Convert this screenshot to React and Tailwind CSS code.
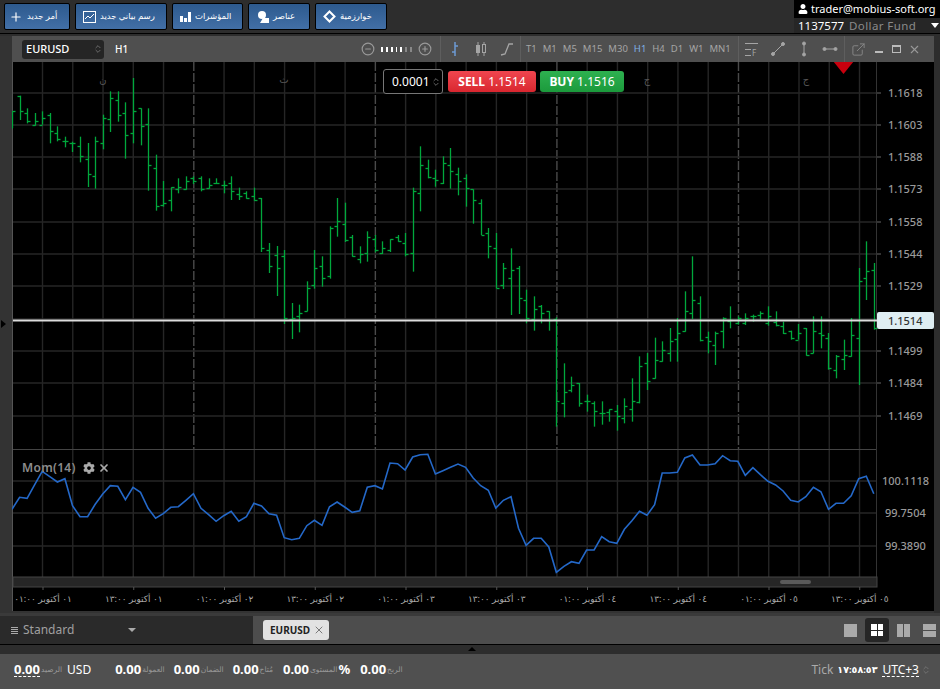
import React from 'react'
import { Plus, X, CirclePlus, CircleMinus, ExternalLink, ChevronsUpDown } from 'lucide-react'
import { FaCog, FaUser } from 'react-icons/fa'

// bar data is [high, low, open, close], read off in 3x crop units, hence the base offsets
const barsA = [[157,207,207,157],[110,183,110,157],[148,193,162,187],[162,200,197,187],[157,197,197,176],[162,253,167,215],[202,247,221,241],[233,265,247,247],[248,279,253,253],[233,310,261,292],[252,384,301,346],[233,389,352,246],[167,271,253,176],[97,219,181,116],[97,188,122,167],[130,299,162,227],[57,253,221,157],[148,259,148,202],[148,395,196,318],[287,455,326,442],[366,443,437,431],[385,457,423,385],[358,403,391,385],[352,392,391,366],[352,375,358,365],[352,397,357,391],[358,389,386,377],[358,375,372,372],[365,403,377,377],[352,423,371,397],[386,423,405,411],[397,419,403,417],[386,425,411,423],[417,579,417,567],[552,642,572,621],[561,711,587,626]]
const barsB = [[363,585,382,567],[522,630,570,567],[527,610,561,553],[457,547,547,476],[363,479,467,416],[382,473,411,448],[292,449,442,297],[207,323,292,277],[221,339,286,332],[318,383,325,382],[352,403,391,376],[307,398,371,325],[318,370,331,363],[337,375,371,357],[331,369,364,331],[318,338,325,337],[312,382,343,376],[176,428,371,187],[52,247,193,107],[92,148,116,144],[122,173,148,153],[82,165,161,102],[57,179,107,127],[116,199,136,156],[136,233,148,176],[181,284,181,212],[211,318,222,317],[297,388,312,351],[312,478,357,476],[402,480,467,416],[358,558,448,422],[411,555,416,508],[482,583,513,567],[502,605,570,541]]
const barsC = [[228,283,232,253],[247,305,247,272],[265,593,270,517],[403,565,522,488],[443,490,483,468],[462,533,463,522],[497,548,517,517],[517,593,522,547],[517,587,552,552],[541,578,548,541],[528,605,547,562],[508,583,567,532],[448,578,541,517],[382,523,518,412],[372,483,403,457],[326,449,447,392],[337,398,397,362],[297,398,372,337],[267,398,331,312],[187,308,307,246],[82,270,253,212],[202,337,221,332],[308,373,323,337],[308,408,347,312],[265,358,307,267],[232,298,277,272],[262,287,282,267],[253,288,283,267],[257,278,262,262],[247,272,257,252],[232,290,282,262],[247,292,278,287],[278,315,292,312],[305,332,307,327],[285,332,332,312],[297,380,297,378],[262,373,372,307],[262,358,312,318],[312,422,327,417],[378,448,422,382],[332,423,391,377],[267,383,382,318],[117,468,326,157],[37,213,148,127],[102,302,122,298]]

const toPage = (base) => (b) => b.map((v) => base + v / 3)
const bars = [...barsA.map(toPage(60)), ...barsB.map(toPage(130)), ...barsC.map(toPage(230))]

const momentum = [211,175,178,137,97,113,129,119,200,233,233,196,165,140,142,182,145,160,208,238,224,205,203,184,164,208,227,247,230,217,247,233,193,201,224,229,296,302,298,260,244,259,203,189,204,220,215,145,140,150,72,74,93,54,47,46,105,95,85,75,85,117,140,154,207,184,173,268,319,298,298,324,400,382,368,373,333,333,293,308,313,271,245,217,229,197,102,102,100,57,48,78,78,74,50,65,67,109,86,107,127,138,156,184,189,173,145,158,211,193,193,170,119,112,164]

const barX = (i) => 12 + i * 7.56
const momentumPoints = momentum.map((v, i) => `${barX(i).toFixed(1)},${(440 + v / 3).toFixed(1)}`).join(' ')

const vLines = Array.from({ length: 28 }, (_, i) => 42.5 + i * 30.26)
const hLines = [94, 126, 158, 190, 223, 255, 287, 320, 352, 384, 417]
const priceLabels = ['1.1618', '1.1603', '1.1588', '1.1573', '1.1558', '1.1544', '1.1529', null, '1.1499', '1.1484', '1.1469']
const momLines = [[482, '100.1118', 882], [514, '99.7504', 885], [547, '99.3890', 885]]
const timeLabels = ['٠١ أكتوبر ٠١:٠٠', '٠١ أكتوبر ١٣:٠٠', '٠٢ أكتوبر ٠١:٠٠', '٠٢ أكتوبر ١٣:٠٠', '٠٣ أكتوبر ٠١:٠٠', '٠٣ أكتوبر ١٣:٠٠', '٠٤ أكتوبر ٠١:٠٠', '٠٤ أكتوبر ١٣:٠٠', '٠٥ أكتوبر ٠١:٠٠', '٠٥ أكتوبر ١٣:٠٠']
const dayMarks = [[103, 'ن'], [284, 'ث'], [647, 'ج'], [806, 'ج']]
const timeframes = ['T1', 'M1', 'M5', 'M15', 'M30', 'H1', 'H4', 'D1', 'W1', 'MN1']
const stats = [
  { value: '0.00', label: 'العمولة', ml: 'ml-[24px]' },
  { value: '0.00', label: 'الضمان', ml: 'ml-[9px]' },
  { value: '0.00', label: 'مُتاح', ml: 'ml-[9px]' },
  { value: '0.00', label: 'المستوى', ml: 'ml-[10px]', suffix: '%' },
  { value: '0.00', label: 'الربح', ml: 'ml-[10px]' }
]

const Chart = () => (
  <svg viewBox="12 63 922 549" width="922" height="549" className="block">
    <rect x="12" y="63" width="922" height="549" fill="#000" />
    {vLines.map((x, i) => (
      <g key={x} strokeWidth="1.4">
        <line x1={x} x2={x} y1="63" y2="450" stroke={i % 6 === 5 ? '#4a4a4a' : '#262626'} strokeDasharray={i % 6 === 5 ? '9 2' : undefined} />
        <line x1={x} x2={x} y1="450" y2="578" stroke="#262626" />
      </g>
    ))}
    {hLines.map((y) => <line key={y} x1="13" x2="877" y1={y} y2={y} stroke="#262626" strokeWidth="1.6" />)}
    {momLines.map(([y]) => <line key={y} x1="13" x2="877" y1={y} y2={y} stroke="#262626" strokeWidth="1.6" />)}
    <line x1="13" x2="877" y1="450.5" y2="450.5" stroke="#444" />
    <line x1="12.5" x2="12.5" y1="63" y2="612" stroke="#555" />
    <line x1="876.5" x2="876.5" y1="63" y2="588" stroke="#333" />

    {dayMarks.map(([x, t]) => <text key={x} x={x} y="84" fontSize="10" fill="#555" textAnchor="middle">{t}</text>)}

    {bars.map(([high, low, open, close], i) => {
      const x = Math.round(barX(i)) + 0.5
      return (
        <g key={i} stroke="#00a83c" strokeWidth="1.3">
          <line x1={x} x2={x} y1={high} y2={low} />
          <line x1={x - 3} x2={x} y1={Math.round(open) + 0.5} y2={Math.round(open) + 0.5} />
          <line x1={x} x2={x + 3} y1={Math.round(close) + 0.5} y2={Math.round(close) + 0.5} />
        </g>
      )
    })}

    <line x1="13" x2="877" y1="321.5" y2="321.5" stroke="#dcdcdc" strokeWidth="2" />
    <polyline points={momentumPoints} fill="none" stroke="#2468c8" strokeWidth="1.6" />

    {/* price axis */}
    {priceLabels.map((label, i) => label && (
      <g key={label}>
        <line x1="877" x2="881" y1={hLines[i]} y2={hLines[i]} stroke="#666" />
        <text x="888" y={hLines[i] + 4} fontSize="11" fill="#9a9a9a" className="font-medium">{label}</text>
      </g>
    ))}
    {momLines.map(([y, t, x]) => (
      <text key={y} x={x} y={y + 4} fontSize="11" fill="#9a9a9a" className="font-medium">{t}</text>
    ))}
    <rect x="877" y="313" width="57" height="17" rx="2" fill="#dfeef3" />
    <text x="888" y="325.5" fontSize="11" fill="#333" className="font-medium">1.1514</text>

    {/* scroll strip + time axis */}
    <rect x="13" y="578" width="864" height="10" fill="#262626" stroke="#444" />
    <rect x="780" y="581" width="31" height="4" rx="2" fill="#5a5a5a" />
    {timeLabels.map((t, i) => {
      const x = 43 + i * 90.75
      return (
        <g key={t}>
          <line x1={x} x2={x} y1="588" y2="591" stroke="#555" />
          <text x={x} y="603" fontSize="9" fill="#a8a8a8" textAnchor="middle" direction="rtl">{t}</text>
        </g>
      )
    })}
    <polygon points="833,62 854,62 843.5,75" fill="#c8000e" />
  </svg>
)

const ToolButton = ({ icon, label, className }) => (
  <button className={`flex h-[27px] items-center gap-[4px] rounded-[2px] border border-black bg-linear-to-b from-[#2d5a8e] to-[#426fa6] text-[8.5px] text-white ${className}`}>
    {icon}
    <span>{label}</span>
  </button>
)

export default function App() {
  return (
    <div className="flex h-screen w-full flex-col overflow-hidden bg-[#2d2d2d] font-['Noto_Sans','DejaVu_Sans',sans-serif]">
      {/* Top bar */}
      <header className="flex h-[34px] shrink-0 items-start justify-between border-b border-black">
        <div className="flex gap-[5px] pl-[4px] pt-[3px]">
          <ToolButton className="w-[66px] pl-[4px]" icon={<Plus size={14} />} label="أمر جديد" />
          <ToolButton className="w-[92px] pl-[7px]" label="رسم بياني جديد" icon={
            <svg width="13" height="12" viewBox="0 0 13 12" fill="none" stroke="#fff"><rect x="0.5" y="0.5" width="12" height="11" /><polyline points="2,8 5,5 7,7 11,3" /></svg>
          } />
          <ToolButton className="w-[71px] pl-[7px]" label="المؤشرات" icon={
            <svg width="11" height="10" viewBox="0 0 11 10" fill="#fff"><rect x="0" y="4" width="3" height="6" /><rect x="4" y="6" width="3" height="4" /><rect x="8" y="0" width="3" height="10" /></svg>
          } />
          <ToolButton className="w-[62px] pl-[8px]" label="عناصر" icon={
            <svg width="12" height="12" viewBox="0 0 12 12" fill="#fff"><circle cx="5" cy="4" r="4" /><path d="M3 12 L6 7 L12 7 L12 12 Z" /></svg>
          } />
          <ToolButton className="w-[72px] pl-[7px]" label="خوارزمية" icon={
            <svg width="13" height="13" viewBox="0 0 13 13" fill="none" stroke="#fff" strokeWidth="2"><path d="M6.5 1.5 L11.5 6.5 L6.5 11.5 L1.5 6.5 Z" /></svg>
          } />
        </div>
        <div className="w-[146px] bg-black">
          <div className="flex h-[18px] items-center gap-[3px] whitespace-nowrap pl-[4px] text-[11px] text-white">
            <FaUser size={10} className="shrink-0" />
            <span>trader@mobius-soft.org</span>
          </div>
          <div className="flex h-[15px] items-center whitespace-nowrap bg-[#262626] pl-[4px] pr-[1px] text-[11.5px]">
            <span className="text-white">1137577</span>
            <span className="ml-[5px] tracking-[0.4px] text-[#8a8a8a]">Dollar Fund</span>
            <span className="ml-auto h-0 w-0 border-x-[4px] border-t-[5px] border-x-transparent border-t-white" />
          </div>
        </div>
      </header>

      <div className="h-[2px] shrink-0 bg-[#2d2d2d]" />

      {/* Chart window */}
      <div className="flex flex-1 bg-[#333]">
        <div className="relative w-[12px] shrink-0">
          <span className="absolute left-[1px] top-[284px] h-0 w-0 border-y-[4px] border-l-[5px] border-y-transparent border-l-black" />
        </div>
        <div className="relative w-[922px]">
          <div className="flex h-[26px] items-center bg-[#4f4f4f] text-[#a5a5a5]">
            <div className="ml-[10px] flex h-[19px] w-[82px] items-center justify-between rounded-[3px] bg-[#252525] pl-[4px] pr-[1px] text-[11px] font-medium text-white">
              EURUSD
              <ChevronsUpDown size={10} className="text-[#777]" />
            </div>
            <span className="ml-[11px] text-[10px] font-medium text-white">H1</span>

            <div className="ml-auto flex h-full items-center">
              <div className="flex items-center gap-[6px] pr-[8px]">
                <CircleMinus size={14} className="text-[#999]" />
                <div className="flex w-[31px] gap-[3px]">
                  <i className="h-[5px] w-[2px] bg-white" />
                  <i className="h-[5px] w-[2px] bg-white" />
                  <i className="h-[5px] w-[2px] bg-white" />
                  <i className="h-[5px] w-[2px] bg-white" />
                  <i className="h-[5px] w-[2px] bg-white" />
                  <i className="h-[5px] w-[2px] bg-[#888]" />
                  <i className="h-[5px] w-[2px] bg-[#888]" />
                </div>
                <CirclePlus size={14} className="text-[#999]" />
              </div>
              <div className="flex h-full w-[80px] items-center gap-[10px] border-l border-[#5e5e5e] pl-[6px]">
                <svg width="16" height="16" viewBox="0 0 16 16" fill="none" stroke="#6d9bd4" strokeWidth="1.5"><path d="M8 1 V15 M5 11 H8 M8 5 H11" /></svg>
                <svg width="16" height="16" viewBox="0 0 16 16" fill="none" stroke="#a5a5a5"><path d="M5 1 V15 M11 1 V15" /><rect x="3.5" y="4.5" width="3" height="7" fill="#a5a5a5" /><rect x="9.5" y="3.5" width="3" height="8" fill="#4f4f4f" /></svg>
                <svg width="16" height="16" viewBox="0 0 16 16" fill="none" stroke="#a5a5a5" strokeWidth="1.3"><polyline points="2,14 6,13 10,3 14,3" /></svg>
              </div>
              <div className="flex h-full w-[218px] items-center gap-[6px] border-l border-[#5e5e5e] pl-[5px] text-[9.5px]">
                {timeframes.map((t) => (
                  <span key={t} className={t === 'H1' ? 'text-[#7fb0e6]' : ''}>{t}</span>
                ))}
              </div>
              <div className="flex h-full w-[106px] items-center gap-[10px] border-l border-[#5e5e5e] pl-[5px]">
                <svg width="16" height="16" viewBox="0 0 16 16" fill="none" stroke="#a5a5a5"><path d="M1 2.5 H14 M1 8.5 H7 M1 14.5 H7" /><text x="8" y="15" fontSize="8" fill="#a5a5a5" stroke="none">F</text></svg>
                <svg width="16" height="16" viewBox="0 0 16 16" fill="none" stroke="#a5a5a5"><path d="M3 13 L13 3" /><circle cx="3" cy="13" r="1.5" fill="#a5a5a5" /><circle cx="13" cy="3" r="1.5" fill="#a5a5a5" /></svg>
                <svg width="16" height="16" viewBox="0 0 16 16" fill="none" stroke="#a5a5a5"><path d="M8 2 V14" /><circle cx="8" cy="2.5" r="1.5" fill="#a5a5a5" /><circle cx="8" cy="13.5" r="1.5" fill="#a5a5a5" /></svg>
                <svg width="16" height="16" viewBox="0 0 16 16" fill="none" stroke="#a5a5a5"><path d="M2 8 H14" /><circle cx="2.5" cy="8" r="1.5" fill="#a5a5a5" /><circle cx="13.5" cy="8" r="1.5" fill="#a5a5a5" /></svg>
              </div>
              <div className="flex h-full w-[90px] items-center border-l border-[#5e5e5e] pl-[6px]">
                <ExternalLink size={15} strokeWidth={1.5} className="text-[#888]" />
                <span className="ml-[9px] mt-[6px] h-[2px] w-[8px] bg-[#bbb]" />
                <span className="ml-[9px] h-[8px] w-[9px] border border-t-2 border-[#bbb]" />
                <X size={13} className="ml-[7px] text-[#999]" />
              </div>
            </div>
          </div>

          <Chart />

          {/* Order panel */}
          <div className="absolute left-[371px] top-[33px] flex items-center">
            <div className="flex h-[25px] w-[60px] items-center justify-between rounded-[3px] border border-[#777] bg-black pl-[8px] pr-[1px] text-[12px] text-white">
              0.0001
              <ChevronsUpDown size={10} className="text-[#777]" />
            </div>
            <button className="ml-[5px] h-[21px] w-[88px] rounded-[3px] bg-linear-to-b from-[#f0454f] to-[#d9262f] text-[12px] text-white">
              <b>SELL</b> 1.1514
            </button>
            <button className="ml-[4px] h-[21px] w-[84px] rounded-[3px] bg-linear-to-b from-[#2eb150] to-[#1b9a3c] text-[12px] text-white">
              <b>BUY</b> 1.1516
            </button>
          </div>

          {/* Indicator label */}
          <div className="absolute left-[10px] top-[423px] flex items-center text-[12px] font-semibold tracking-[0.3px] text-[#8c8c8c]">
            Mom(14)
            <FaCog size={12} className="ml-[7px] text-[#aaa]" />
            <X size={12} strokeWidth={3.5} className="ml-[3px] text-[#aaa]" />
          </div>
        </div>
        <div className="w-[6px] shrink-0 bg-[#2d2d2d]" />
      </div>

      <div className="h-[3px] shrink-0 bg-[#3a3a3a]" />

      {/* Workspace tabs */}
      <div className="flex h-[29px] shrink-0 border-b border-black">
        <div className="flex w-[253px] items-center bg-[#2a2a2a] pl-[11px] text-[12px] text-[#a0a0a0]">
          <span className="flex w-[7px] flex-col gap-[1px]">
            <i className="h-[1px] bg-[#aaa]" />
            <i className="h-[1px] bg-[#aaa]" />
            <i className="h-[1px] bg-[#aaa]" />
            <i className="h-[1px] bg-[#aaa]" />
          </span>
          <span className="ml-[5px]">Standard</span>
          <span className="ml-[54px] h-0 w-0 border-x-[4px] border-t-[4px] border-x-transparent border-t-[#aaa]" />
        </div>
        <div className="flex flex-1 items-center bg-[#4d4d4d] pl-[10px] pr-[4px]">
          <div className="flex h-[20px] w-[66px] items-center justify-between rounded-[3px] bg-[#e2e2e2] pl-[7px] pr-[4px] text-[10px] font-bold text-[#222]">
            EURUSD
            <X size={12} strokeWidth={1.5} className="text-[#555]" />
          </div>
          <div className="ml-auto flex items-center">
            <span className="h-[13px] w-[13px] bg-[#aaa]" />
            <span className="ml-[8px] grid h-[24px] w-[24px] grid-cols-2 gap-[1px] rounded-[3px] bg-[#262626] p-[6px]">
              <i className="bg-white" />
              <i className="bg-white" />
              <i className="bg-white" />
              <i className="bg-white" />
            </span>
            <span className="ml-[8px] grid h-[13px] w-[13px] grid-cols-2 gap-[1px]">
              <i className="bg-[#aaa]" />
              <i className="bg-[#aaa]" />
            </span>
            <span className="ml-[13px] grid h-[13px] w-[13px] grid-rows-2 gap-[1px]">
              <i className="bg-[#aaa]" />
              <i className="bg-[#aaa]" />
            </span>
          </div>
        </div>
      </div>

      <div className="relative h-[9px] shrink-0 bg-[#2d2d2d]">
        <span className="absolute left-[468px] top-[2px] h-0 w-0 border-x-[4px] border-b-[4px] border-x-transparent border-b-black" />
      </div>

      {/* Account status */}
      <footer className="flex h-[35px] shrink-0 items-center bg-[#505050] pb-[3px] pl-[14px] pr-[9px] text-[12px]">
        <b className="border-b border-dashed border-white text-[13px] leading-[13px] text-white">0.00</b>
        <span className="ml-[1px] text-[7.5px] text-[#999]">الرصيد</span>
        <span className="ml-[5px] text-white">USD</span>
        {stats.map((s, i) => (
          <div key={i} className={`flex items-center ${s.ml}`}>
            <b className="text-[13px] text-white">{s.value}</b>
            <span className="ml-[1px] text-[7.5px] text-[#999]">{s.label}</span>
            {s.suffix && <b className="ml-[1px] text-[13px] text-white">{s.suffix}</b>}
          </div>
        ))}
        <div className="ml-auto flex items-center">
          <span className="text-[#aaa]">Tick</span>
          <b className="ml-[4px] text-[9.5px] text-white">١٧:٥٨:٥٣</b>
          <span className="ml-[5px] border-b border-dashed border-white leading-[13px] text-white">UTC+3</span>
          <ChevronsUpDown size={10} className="ml-[2px] text-[#777]" />
        </div>
      </footer>
    </div>
  )
}
